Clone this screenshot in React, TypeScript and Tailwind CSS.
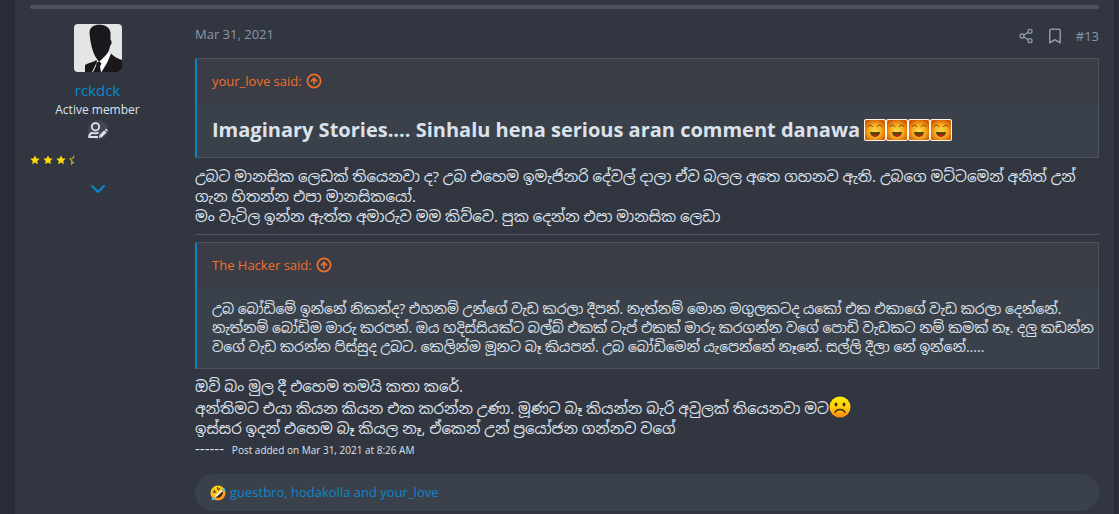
import React from "react";
import { Bookmark, ChevronDown, CircleArrowUp, Share2 } from "lucide-react";

type quoteProps = {
  author: string;
  children: React.ReactNode;
};

const STAR_PATH =
  "M12 1l3.300 6.900 7.700 1-5.600 5.300 1.400 7.800-6.800-3.800-6.800 3.800 1.400-7.800L1 8.900l7.700-1z";

function Avatar() {
  return (
    <svg className="w-12 h-12 rounded" viewBox="0 0 48 48" aria-label="rckdck">
      <rect width="48" height="48" fill="#e4e5e5" />
      <path d="M25 36l8-8 5 3-4 17H19l1-9z" fill="#ffffff" />
      <path
        d="M15.500 8C16 3 20 .8 25 .8c6 0 11 2.500 11.500 8.200v7c1.600.5 1.400 5-.4 5.500C35.500 26 34 29 32 31l-7 7c-2-3-5-7-6-11-1.500-4-3-11-3.500-19z"
        fill="#1a181d"
      />
      <path
        d="M11 48v-7c4-2.500 8-2.500 11.500-5l.5 2-5 10zM37 29.500c2 2.500 6.500 5 11 6.500v12H27.500L33 39z"
        fill="#1a181d"
      />
      <path d="M22.500 38.500l3-1 2 2-1.500 3 1 5.500h-8l3-6z" fill="#1a181d" />
    </svg>
  );
}

function UserEditIcon() {
  return (
    <span className="flex items-center justify-center w-5 h-5 rounded-full bg-[#434753]">
      <svg
        className="w-5 h-4 shrink-0"
        viewBox="0 0 20 16"
        fill="none"
        stroke="#dce2ec"
        strokeWidth="1.8"
      >
        <circle cx="7.500" cy="4.800" r="3.700" />
        <path d="M10.500 11.200c-1-.6-1.500-.2-3 .1-1.600-.2-2-.6-3.600-.3-1.700.4-2.800 1.600-2.800 4H10" />
        <path
          d="M11.500 13l4.800-4.800 2.200 2.200-4.800 4.800-2.700.6zM17 7.500l1-1 2 2-1 1.200z"
          fill="#dce2ec"
          stroke="none"
        />
      </svg>
    </span>
  );
}

function Stars() {
  return (
    <div className="flex gap-[3px]" role="img" aria-label="3.5 stars">
      {[1, 2, 3].map((n) => (
        <svg key={n} className="w-2.5 h-2.5" viewBox="0 0 24 24" fill="#ffd90a">
          <path d={STAR_PATH} />
        </svg>
      ))}
      <svg
        className="w-2.5 h-2.5"
        viewBox="0 0 24 24"
        fill="none"
        stroke="#c9ab1a"
        strokeWidth="3"
      >
        <path d="M12 2L9 8.500l-6.500 1 4.700 4.600L6 21l6-3.500" />
      </svg>
    </div>
  );
}

function LaughSmilie() {
  return (
    <svg className="w-[22px] h-[22px]" viewBox="0 0 22 22">
      <defs>
        <radialGradient id="laugh" cy="0.55" r="0.62">
          <stop offset="0" stopColor="#ffdc50" />
          <stop offset="0.5" stopColor="#f9ae20" />
          <stop offset="1" stopColor="#d05800" />
        </radialGradient>
      </defs>
      <rect width="22" height="22" rx="2" fill="#fff3e2" />
      <rect x="1" y="1" width="20" height="20" rx="1.500" fill="url(#laugh)" />
      <path
        d="M4 8c1-2.300 4-2.300 5 0M13 8c1-2.300 4-2.300 5 0"
        fill="none"
        stroke="#7c4306"
        strokeWidth="1"
      />
      <path d="M6 13h10c0 6.300-10 6.300-10 0z" fill="#5d4508" />
      <path d="M8.500 16.500c1.500-1.200 3.500-1.200 5 0-1.500 1.500-3.500 1.500-5 0z" fill="#dc1420" />
    </svg>
  );
}

function FrownSmilie() {
  return (
    <svg className="inline-block w-[22px] h-[22px] align-text-bottom" viewBox="0 0 22 22">
      <defs>
        <linearGradient id="frown" x2="0" y2="1">
          <stop offset="0" stopColor="#ffee00" />
          <stop offset="0.5" stopColor="#ffcf10" />
          <stop offset="1" stopColor="#ff8a12" />
        </linearGradient>
      </defs>
      <circle cx="11" cy="11" r="10.500" fill="url(#frown)" />
      <ellipse cx="7" cy="8.500" rx="1.400" ry="2" fill="#3b2a12" />
      <ellipse cx="15" cy="8.500" rx="1.400" ry="2" fill="#3b2a12" />
      <path
        d="M6 16.500c1.500-4 8.500-4 10 0"
        fill="none"
        stroke="#3b2a12"
        strokeWidth="1.300"
        strokeLinecap="round"
      />
    </svg>
  );
}

function RoflSmilie() {
  return (
    <svg className="w-4 h-4 shrink-0" viewBox="0 0 16 16">
      <defs>
        <linearGradient id="rofl" x2="0.6" y2="1">
          <stop offset="0" stopColor="#ffee10" />
          <stop offset="1" stopColor="#ff9420" />
        </linearGradient>
      </defs>
      <circle cx="8" cy="8" r="7.500" fill="url(#rofl)" />
      <path d="M2.500 7l3 .2-1.700-2.600M7.500 2l.5 3 2.200-1.800" fill="none" stroke="#3b2a12" />
      <path d="M12.800 6c1 4.500-3 7.600-7.300 6.600z" fill="#3b2412" />
      <path d="M12.800 6L5.500 12.600 5 11l6-5.500z" fill="#ffffff" />
      <path
        d="M12.500 3.800c1.200-.8 3-.1 3 1.200 0 1.200-1.600 1.500-3 .8zM3.500 12c-1.500 0-2.300 1.500-1.600 2.700.8 1.200 2.400.3 2.800-1.500z"
        fill="#42c4f2"
      />
    </svg>
  );
}

function Quote({ author, children }: quoteProps) {
  return (
    <blockquote className="border border-l-2 border-[#4f535e] border-l-[#0884ce] bg-[#3b414a]">
      <div className="flex bg-[#3a3c46] px-[15px] py-3">
        <a
          href="#quoted"
          className="flex items-center gap-1 text-[13px] leading-5 text-[#f0702a]"
        >
          {author} said:
          <CircleArrowUp size={16} strokeWidth={2.5} />
        </a>
      </div>
      <div className="pl-[15px] py-3">{children}</div>
    </blockquote>
  );
}

function UserCell() {
  return (
    <aside className="w-[135px] shrink-0 flex flex-col items-center">
      <Avatar />
      <h4 className="mt-2 text-[15px] leading-5">
        <a href="#rckdck" className="text-[#0a87ce]">
          rckdck
        </a>
      </h4>
      <div className="text-xs leading-5 text-[#dce2ec]">Active member</div>
      <UserEditIcon />
      <div className="self-start mt-[15px]">
        <Stars />
      </div>
      <button type="button" className="mt-3 text-[#0a87ce]" aria-label="Show details">
        <ChevronDown size={24} strokeWidth={2} />
      </button>
    </aside>
  );
}

function App() {
  return (
    <div className="min-h-screen bg-[#282c36] pl-[15px] pr-[5px] font-['Open_Sans','Noto_Sans_Sinhala','Noto_Sans',sans-serif] text-[#dce2ec]">
      <article className="min-h-screen bg-[#313641] px-[15px] pt-[5px]">
        <div className="h-1 rounded-full bg-[#4f535e]" />
        <div className="flex gap-[30px] pt-[15px]">
          <UserCell />
          <div className="flex-1 min-w-0">
            <header className="flex justify-between items-start h-[34px] text-[13px] leading-5 text-[#8c97ab]">
              <time dateTime="2021-03-31">Mar 31, 2021</time>
              <div className="flex items-center gap-3 pt-0.5">
                <button type="button" aria-label="Share">
                  <Share2 size={16} />
                </button>
                <button type="button" aria-label="Bookmark">
                  <Bookmark size={18} />
                </button>
                <a href="#post-13">#13</a>
              </div>
            </header>

            <Quote author="your_love">
              <div className="flex items-center text-xl leading-[30px] font-bold">
                <span className="mr-1">
                  Imaginary Stories.... Sinhalu hena serious aran comment danawa
                </span>
                <LaughSmilie />
                <LaughSmilie />
                <LaughSmilie />
                <LaughSmilie />
              </div>
            </Quote>

            <p className="mt-2 text-[15px] leading-5">
              උබට මානසික ලෙඩක් තියෙනවා ද? උබ එහෙම ඉමැජිනරි දේවල් දාලා ඒව බලල අතෙ
              ගහනව ඇති. උබගෙ මට්ටමෙන් අනිත් උන් ගැන හිතන්න එපා මානසිකයෝ.
              <br />
              මං වැටිල ඉන්න ඇත්ත අමාරුව මම කිව්වෙ. පුක දෙන්න එපා මානසික ලෙඩා
            </p>
            <hr className="mt-2 mb-[7px] border-[#4f535e]" />

            <Quote author="The Hacker">
              <p className="text-sm leading-[19px]">
                උබ බෝඩිමේ ඉන්නේ නිකන්ද? එහනම් උන්ගේ වැඩ කරලා දීපන්. නැත්නම් මොන
                මගුලකටද යකෝ එක එකාගේ වැඩ කරලා දෙන්නේ. නැත්නම් බෝඩිම මාරු කරපන්.
                ඔය හදිස්සියක්ට බල්බ් එකක් ටැප් එකක් මාරු කරගන්න වගේ පොඩි වැඩකට
                නම් කමක් නෑ. දලු කඩන්න වගේ වැඩ කරන්න පිස්සුද උබට. කෙලින්ම මූනට බෑ
                කියපන්. උබ බෝඩිමෙන් යැපෙන්නේ නෑනේ. සල්ලි දීලා නේ ඉන්නේ.....
              </p>
            </Quote>

            <p className="mt-[7px] text-[15px] leading-5">
              ඔව් බං මුල දී එහෙම තමයි කතා කරේ.
              <br />
              අන්තිමට එයා කියන කියන එක කරන්න උණා. මූණට බෑ කියන්න බැරි අවුලක්
              තියෙනවා මට
              <FrownSmilie />
              <br />
              ඉස්සර ඉදන් එහෙම බෑ කියල නෑ, ඒකෙන් උන් ප්‍රයෝජන ගන්නව වගේ
              <br />
              ------ <span className="ml-1 text-[10px]">Post added on Mar 31, 2021 at 8:26 AM</span>
            </p>

            <div className="flex items-center gap-1 mt-3.5 px-[15px] h-[37px] rounded-full bg-[#3b414a] text-[13px]">
              <RoflSmilie />
              <a href="#reactions" className="text-[#0a87ce]">
                guestbro, hodakolla and your_love
              </a>
            </div>
          </div>
        </div>
      </article>
    </div>
  );
}

export default App;
